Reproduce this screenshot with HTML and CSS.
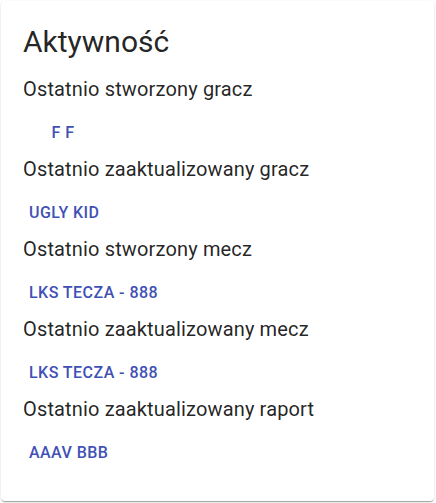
FILE: index.html
```html
<!DOCTYPE html>
<html lang="pl">
<head>
<meta charset="utf-8">
<title>Aktywność</title>
<link rel="stylesheet" href="styles.css">
</head>
<body>
<div class="card">
  <h2 class="title">Aktywność</h2>
  <div class="section">
    <p class="label">Ostatnio stworzony gracz</p>
    <button class="btn btn-wide">F F</button>
  </div>
  <div class="section">
    <p class="label">Ostatnio zaaktualizowany gracz</p>
    <button class="btn">UGLY KID</button>
  </div>
  <div class="section">
    <p class="label">Ostatnio stworzony mecz</p>
    <button class="btn">LKS TECZA - 888</button>
  </div>
  <div class="section">
    <p class="label">Ostatnio zaaktualizowany mecz</p>
    <button class="btn">LKS TECZA - 888</button>
  </div>
  <div class="section">
    <p class="label">Ostatnio zaaktualizowany raport</p>
    <button class="btn">AAAV BBB</button>
  </div>
</div>
</body>
</html>
```

FILE: styles.css
```css
html, body {
  margin: 0;
  height: 100%;
  background: #fff;
}
body {
  padding: 1px 2px 2px 1px;
  box-sizing: border-box;
  font-family: Roboto, "Liberation Sans", sans-serif;
  color: rgba(0, 0, 0, 0.87);
}
.card {
  box-sizing: border-box;
  height: 100%;
  background: #fff;
  border-radius: 4px;
  box-shadow: 0 2px 1px -1px rgba(0,0,0,0.2), 0 1px 1px 0 rgba(0,0,0,0.14), 0 1px 3px 0 rgba(0,0,0,0.12);
  padding: 21px 20px 21px 22px;
}
.title {
  margin: 0 0 11px;
  font-size: 30px;
  font-weight: 400;
  line-height: 40px;
}
.section {
  display: flex;
  flex-direction: column;
  align-items: flex-start;
  padding-bottom: 2px;
}
.label {
  margin: 0;
  font-size: 20px;
  line-height: 32px;
  letter-spacing: 0.15px;
}
.btn {
  margin-top: 10px;
  min-width: 64px;
  padding: 6px 6px;
  border: 0;
  border-radius: 4px;
  background: transparent;
  color: #3f51b5;
  font-family: Roboto, "Liberation Sans", sans-serif;
  font-size: 16px;
  font-weight: 500;
  line-height: 24px;
  letter-spacing: 0.45px;
  text-transform: uppercase;
  cursor: pointer;
}
.btn-wide {
  min-width: 80px;
}
```
